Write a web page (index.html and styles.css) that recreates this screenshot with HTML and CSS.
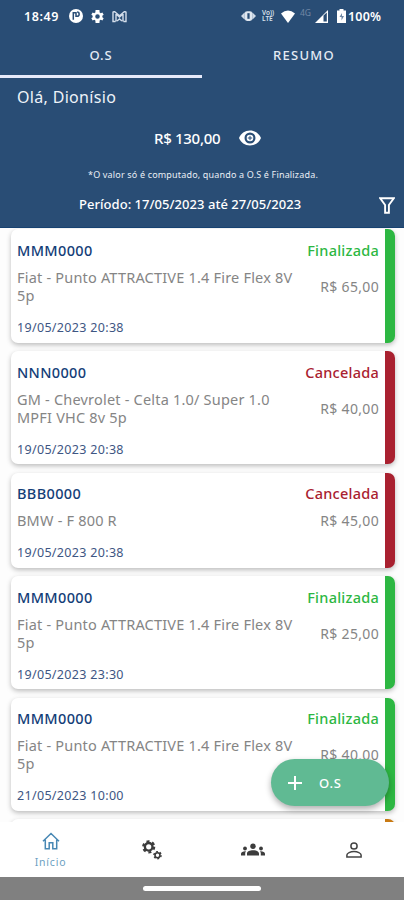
FILE: index.html
```html
<!DOCTYPE html>
<html lang="pt-BR">
<head>
<meta charset="utf-8">
<meta name="viewport" content="width=device-width">
<title>Ordens de serviço</title>
<link rel="stylesheet" href="styles.css">
</head>
<body>
<div class="app">
  <header class="header">
    <div class="status">
      <span class="clock">18:49</span>
      <svg class="s-app" viewBox="0 0 14 14"><circle cx="7" cy="7" r="7" fill="#fff"/><path d="M4.300 10.800V3.700h3.200M7 3v4.200h1.100a2 2 0 0 0 0-4.100" fill="none" stroke="#294d75" stroke-width="1.500"/></svg>
      <svg class="s-gear" viewBox="2 2 20 20"><path fill="#fff" fill-rule="evenodd" d="M19.400 13a7 7 0 0 0 0-2l2.100-1.600-2-3.500-2.500 1a7 7 0 0 0-1.700-1L15 2H9l-.3 3.900a7 7 0 0 0-1.700 1l-2.500-1-2 3.500L4.600 11a7 7 0 0 0 0 2l-2.100 1.600 2 3.500 2.500-1a7 7 0 0 0 1.700 1L9 22h6l.3-3.900a7 7 0 0 0 1.700-1l2.500 1 2-3.500zM12 15.500a3.500 3.500 0 1 1 0-7 3.500 3.500 0 0 1 0 7z"/></svg>
      <svg class="s-mail" viewBox="0 0 15 13"><path d="M4 11.500V4l3.500 3L11 4v7.500M1 1.500v10h2.500M14 1.500v10h-2.500M1.200 1.800h1.500l4.800 4 4.800-4h1.500M5 11l2.500-2L10 11" fill="none" stroke="#d4deeb" stroke-width="1.400"/></svg>
      <span class="grow"></span>
      <svg class="s-vib" viewBox="0 0 16 12"><path d="M0 6l4-4v8zM16 6l-4-4v8z" fill="#d0dae7"/><rect x="4" y=".8" width="8" height="10.400" rx="2.500" fill="#dfe7f0"/><rect x="6.800" y="3" width="2.400" height="6" fill="#294d75"/></svg>
      <span class="volte"><span>Vo))</span><span>LTE</span></span>
      <svg class="s-wifi" viewBox="0 0 14 13"><path d="M0 3.500Q7-2.500 14 3.500L7 13z" fill="#fff"/></svg>
      <span class="fourg">4G</span>
      <svg class="s-signal" viewBox="0 0 13 13"><path d="M0 13L13 0v13z" fill="#fff"/><path d="M8.500 5.500L11.800 2.600V11.500H8.500z" fill="#294d75"/></svg>
      <svg class="s-bat" viewBox="0 0 9 14"><path d="M2.500 0h4v1.500H9V14H0V1.500h2.500z" fill="#fff"/><path d="M5 4L2.500 8h2v3.500L7 7H5z" fill="#6f88a5"/></svg>
      <span class="pct">100%</span>
    </div>
    <nav class="tabs"><span class="tab active"><b>O.S</b></span><span class="tab"><b class="resumo">RESUMO</b></span></nav>
    <div class="hello">Olá, Dionísio</div>
    <div class="total"><span class="amount">R$ 130,00</span>
      <svg class="eye" viewBox="1 4 22 16"><path fill="#fff" fill-rule="evenodd" d="M12 4.500C7 4.500 2.700 7.600 1 12c1.700 4.400 6 7.500 11 7.500s9.300-3.100 11-7.500C21.300 7.600 17 4.500 12 4.500zM12 17.500a5.500 5.500 0 1 1 0-11 5.500 5.500 0 0 1 0 11z"/><circle cx="12" cy="12" r="3.300" fill="#fff"/><path d="M12 9.800v4.400M9.800 12h4.400" stroke="#294d75" stroke-width="1"/></svg>
    </div>
    <div class="note"><span>*O valor só é computado, quando a O.S é Finalizada.</span></div>
    <div class="period"><span>Período: 17/05/2023 até 27/05/2023</span>
      <svg class="filter" viewBox="0 0 16 17"><path d="M1.200 1.200h13.600L9.900 8v7.800H6.100V8z" fill="none" stroke="#fff" stroke-width="1.900"/></svg>
    </div>
  </header>

  <main class="list">
    <article class="card done"><div class="info"><h2>MMM0000</h2><p>Fiat - Punto ATTRACTIVE 1.4 Fire Flex 8V<br>5p</p><time>19/05/2023 20:38</time></div><div class="side"><strong>Finalizada</strong><span>R$ 65,00</span></div></article>
    <article class="card cancelled"><div class="info"><h2>NNN0000</h2><p>GM - Chevrolet - Celta 1.0/ Super 1.0<br>MPFI VHC 8v 5p</p><time>19/05/2023 20:38</time></div><div class="side"><strong>Cancelada</strong><span>R$ 40,00</span></div></article>
    <article class="card cancelled short"><div class="info"><h2>BBB0000</h2><p>BMW - F 800 R</p><time>19/05/2023 20:38</time></div><div class="side"><strong>Cancelada</strong><span>R$ 45,00</span></div></article>
    <article class="card done"><div class="info"><h2>MMM0000</h2><p>Fiat - Punto ATTRACTIVE 1.4 Fire Flex 8V<br>5p</p><time>19/05/2023 23:30</time></div><div class="side"><strong>Finalizada</strong><span>R$ 25,00</span></div></article>
    <article class="card done"><div class="info"><h2>MMM0000</h2><p>Fiat - Punto ATTRACTIVE 1.4 Fire Flex 8V<br>5p</p><time>21/05/2023 10:00</time></div><div class="side"><strong>Finalizada</strong><span>R$ 40,00</span></div></article>
    <article class="card pending"></article>
  </main>

  <button class="fab"><svg viewBox="0 0 14 14"><path d="M7 0v14M0 7h14" stroke="#fff" stroke-width="2"/></svg><span>O.S</span></button>

  <nav class="bottom">
    <a class="item home"><svg viewBox="0 0 18 18"><path d="M1 9.300L9 1.500l8 7.800M3.300 7.800v9h3.900v-6h3.600v6h3.900v-9" fill="none" stroke="#4888b4" stroke-width="1.500"/></svg><span>Início</span></a>
    <a class="item"><svg class="gears" viewBox="0 0 20 20"><g fill="none" stroke="#3c3c3c"><circle cx="6.700" cy="6.800" r="3.800" stroke-width="2.400"/><circle cx="6.700" cy="6.800" r="5.500" stroke-width="2.200" stroke-dasharray="3 2.760"/><circle cx="15.500" cy="15.200" r="2.500" stroke-width="1.600"/><circle cx="15.500" cy="15.200" r="3.600" stroke-width="1.400" stroke-dasharray="1.900 1.870"/></g></svg></a>
    <a class="item"><svg class="people" viewBox="0 0 24 13"><g fill="#3c3c3c"><circle cx="12" cy="3.300" r="2.700"/><circle cx="4" cy="5.500" r="1.900"/><circle cx="20" cy="5.500" r="1.900"/><path d="M6 12.500v-2c0-2 3-3.200 6-3.200s6 1.200 6 3.200v2zM0 12.500v-1.700c0-1.800 2.300-2.700 5-2.500-.6.700-.8 1.300-.8 2.300v1.900zM24 12.500v-1.700c0-1.800-2.300-2.700-5-2.500.6.700.8 1.300.8 2.300v1.900z"/></g></svg></a>
    <a class="item"><svg class="person" viewBox="0 0 16 16"><g fill="none" stroke="#444" stroke-width="1.500"><circle cx="8" cy="4" r="3.100"/><path d="M.9 15.100v-2c0-2 3.500-3.500 7.100-3.500s7.100 1.500 7.100 3.500v2z"/></g></svg></a>
  </nav>
  <footer class="gesture"><i></i></footer>
</div>
</body>
</html>
```
FILE: styles.css
```css
* { box-sizing: border-box; }
body { margin: 0; font-family: "Noto Sans", sans-serif; background: #fdfdfd; }
svg { display: block; flex: none; }
.app { position: relative; width: 404px; height: 900px; display: flex; flex-direction: column; overflow: hidden; }

.header { height: 228px; flex: none; background: #294d75; color: #fff; border-bottom: 1px solid #174271; }
.status { height: 32px; display: flex; align-items: center; padding: 0 22px 0 24px; font-size: 12.5px; font-weight: 600; }
.clock { width: 45px; letter-spacing: .6px; }
.s-app { width: 14px; height: 14px; margin-right: 8px; }
.s-gear { width: 13px; height: 13px; margin-right: 8px; }
.s-mail { width: 15px; height: 13px; }
.grow { flex: 1; }
.s-vib { width: 15px; height: 12px; margin-right: 6px; }
.volte { width: 19px; display: flex; flex-direction: column; font-size: 6.5px; line-height: 6px; color: #d8e1ec; }
.s-wifi { width: 14px; height: 13px; margin-right: 5px; }
.fourg { width: 15px; font-size: 8.5px; line-height: 8px; font-weight: 400; color: #7188a5; align-self: flex-start; margin-top: 9px; }
.s-signal { width: 13px; height: 13px; margin-right: 9px; }
.s-bat { width: 9px; height: 14px; margin-right: 2px; }
.pct { width: 34px; font-size: 12.5px; letter-spacing: .2px; white-space: nowrap; }

.tabs { display: flex; height: 46px; }
.tab { flex: 1; display: flex; align-items: center; justify-content: center; padding-top: 3px; border-bottom: 3px solid transparent; }
.tab.active { border-color: #e6eafa; }
.tab b { font-size: 13px; line-height: 18px; font-weight: 500; letter-spacing: .8px; color: #e4ebf4; }
.tab .resumo { letter-spacing: 1.3px; margin-left: 2px; }
.hello { height: 39px; padding: 0 17px; font-size: 16px; line-height: 39px; letter-spacing: .32px; color: #eef3f9; }
.total { height: 42px; display: flex; align-items: center; padding-left: 154px; }
.amount { width: 85px; font-size: 15px; font-weight: 500; letter-spacing: -.3px; white-space: nowrap; }
.eye { width: 22px; height: 16px; }
.note { height: 31px; line-height: 31px; padding-left: 88px; font-size: 9px; letter-spacing: .17px; color: #e9eff6; white-space: nowrap; }
.period { height: 28px; display: flex; align-items: center; padding: 0 9px 0 79px; justify-content: space-between; font-size: 13px; font-weight: 500; letter-spacing: .04px; white-space: nowrap; }
.filter { width: 16px; height: 17px; margin-top: 3px; }

.list { flex: none; height: 594px; overflow: hidden; padding: 1.400px 9px 0 11px; display: flex; flex-direction: column; gap: 8.3px; }
.card { flex: none; height: 113.300px; display: flex; justify-content: space-between; padding: 0 6px; background: #fff; border-right: 10px solid #2db742; border-radius: 7px; box-shadow: 0 2px 5px rgba(0,0,0,.26); }
.card.short { height: 95.300px; }
.cancelled { border-right-color: #a92130; }
.pending { border-right-color: #c97a13; }
.info { white-space: nowrap; }
.info h2 { margin: 9.600px 0 0; font-size: 14.500px; line-height: 22px; font-weight: 500; letter-spacing: .35px; color: #143e78; }
.info p { margin: 7px 0 0; font-size: 14.500px; line-height: 18px; letter-spacing: .2px; color: #858585; }
.info time { display: block; margin-top: 15px; font-size: 12.500px; line-height: 18px; letter-spacing: .32px; color: #3e5683; }
.side { display: flex; flex-direction: column; align-items: flex-end; white-space: nowrap; }
.side strong { margin-top: 9.600px; font-size: 14.500px; line-height: 22px; font-weight: 500; letter-spacing: .25px; color: #2db742; }
.cancelled .side strong { color: #a92130; }
.side span { margin-top: 15px; font-size: 14px; line-height: 22px; letter-spacing: .32px; color: #858585; }
.short .side span { margin-top: 6px; }

.fab { position: absolute; left: 271px; top: 759px; width: 118px; height: 47px; border: 0; border-radius: 24px; padding: 0 0 0 17px; display: flex; align-items: center; background: #60ba93; color: #fff; box-shadow: 0 3px 6px rgba(0,0,0,.32); font: 500 13px "Noto Sans", sans-serif; }
.fab svg { width: 14px; height: 14px; margin-right: 17px; }
.fab span { letter-spacing: .8px; }

.bottom { height: 55px; flex: none; display: flex; background: #fff; }
.item { flex: 1; display: flex; flex-direction: column; align-items: center; justify-content: center; }
.home { justify-content: flex-start; padding-top: 10px; }
.home svg { width: 18px; height: 18px; }
.home span { margin-top: 5px; font-size: 10.500px; line-height: 15px; letter-spacing: .8px; color: #6c9fc2; }
.gears { width: 20px; height: 20px; }
.people { width: 24px; height: 13px; }
.person { width: 16px; height: 16px; }
.gesture { height: 23px; flex: none; background: #808080; display: flex; justify-content: center; align-items: center; padding-bottom: 1px; }
.gesture i { width: 118px; height: 5px; border-radius: 3px; background: #fff; }
```
